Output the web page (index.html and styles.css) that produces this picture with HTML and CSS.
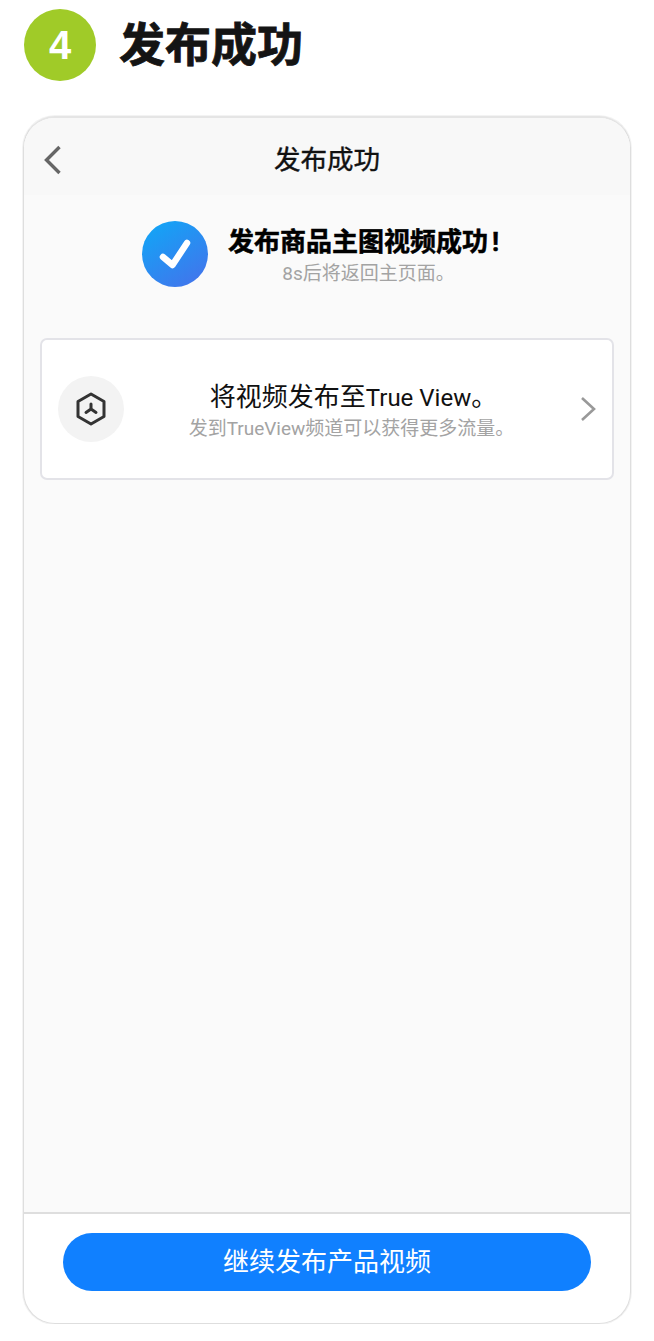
FILE: index.html
```html
<!DOCTYPE html>
<html lang="zh-CN">
<head>
    <meta charset="UTF-8">
    <meta name="viewport" content="width=device-width, initial-scale=1.0">
    <title>发布成功</title>
    <link rel="stylesheet" href="styles.css">
</head>
<body>
    <div class="step-head">
        <div class="step-num">4</div>
        <h1>发布成功</h1>
    </div>

    <div class="phone">
        <div class="nav-bar">
            <svg class="nav-back" width="20" height="30" viewBox="0 0 20 30">
                <path d="M16.5 2 L3.5 15 L16.5 28" fill="none" stroke="#666666" stroke-width="3.4"/>
            </svg>
            <span>发布成功</span>
        </div>

        <div class="content">
            <div class="success-row">
                <svg class="success-icon" width="66" height="66" viewBox="0 0 66 66">
                    <defs>
                        <linearGradient id="checkBg" x1="0.2" y1="0.05" x2="0.8" y2="0.95">
                            <stop offset="0" stop-color="#14a3f6"/>
                            <stop offset="1" stop-color="#4076ec"/>
                        </linearGradient>
                    </defs>
                    <circle cx="33" cy="33" r="33" fill="url(#checkBg)"/>
                    <path d="M21 36 L30.5 44 L45 22" fill="none" stroke="#ffffff" stroke-width="6.5" stroke-linecap="round" stroke-linejoin="round"/>
                </svg>
                <div class="success-text">
                    <div class="success-title">发布商品主图视频成功<span class="bang">!</span></div>
                    <div class="success-sub">8s后将返回主页面。</div>
                </div>
            </div>

            <div class="channel-card">
                <div class="channel-icon">
                    <svg width="32" height="34" viewBox="0 0 32 34">
                        <path d="M16 2 L29 9.5 L29 24.5 L16 32 L3 24.5 L3 9.5 Z" fill="none" stroke="#333333" stroke-width="3" stroke-linejoin="round"/>
                        <path d="M16 12 L16 17 M16 17 L11 20.5 M16 17 L21 20.5" fill="none" stroke="#333333" stroke-width="3" stroke-linecap="round"/>
                    </svg>
                </div>
                <div class="channel-text">
                    <div class="channel-title">将视频发布至<span class="latin">True View</span>。</div>
                    <div class="channel-sub">发到TrueView频道可以获得更多流量。</div>
                </div>
                <svg class="channel-arrow" width="18" height="26" viewBox="0 0 18 26">
                    <path d="M3 2 L15 13 L3 24" fill="none" stroke="#999999" stroke-width="2.6"/>
                </svg>
            </div>
        </div>

        <div class="footer">
            <button class="continue-btn">继续发布产品视频</button>
        </div>
    </div>
</body>
</html>
```

FILE: styles.css
```css
* {
    box-sizing: border-box;
}
body {
    margin: 0;
    padding: 9px 23px 0;
    background-color: #ffffff;
    font-family: Roboto, "Noto Sans CJK SC", sans-serif;
}
.step-head {
    display: flex;
    align-items: center;
    gap: 23px;
    height: 72px;
    margin-left: 1px;
}
.step-num {
    width: 72px;
    height: 72px;
    border-radius: 50%;
    background-color: #a0cb28;
    color: #ffffff;
    font-family: "Liberation Sans", sans-serif;
    font-size: 40px;
    font-weight: bold;
    line-height: 72px;
    text-align: center;
}
h1 {
    margin: -8px 0 0;
    font-size: 46px;
    font-weight: bold;
    color: #141414;
    -webkit-text-stroke: 0.8px #141414;
}
.phone {
    display: flex;
    flex-direction: column;
    width: 608px;
    height: 1208px;
    margin-top: 35px;
    border: 1px solid #dedede;
    border-top: 2px solid #e5e5e5;
    border-radius: 32px;
    box-shadow: 0 0 0 1px #f3f3f3;
    overflow: hidden;
    background-color: #ffffff;
}
.nav-bar {
    position: relative;
    flex: none;
    height: 77px;
    background-color: #f8f8f8;
    font-size: 26.5px;
    line-height: 84px;
    text-align: center;
    color: #111111;
    -webkit-text-stroke: 0.4px #111111;
}
.nav-back {
    position: absolute;
    left: 19px;
    top: 27px;
}
.content {
    flex: 1;
    padding: 0 16px;
    background-color: #fafafa;
    border-bottom: 2px solid #dedede;
}
.success-row {
    display: flex;
    align-items: center;
    justify-content: center;
    gap: 20px;
    padding-top: 26px;
    padding-right: 13px;
}
.success-text {
    padding-top: 3px;
}
.success-title {
    font-size: 26px;
    font-weight: bold;
    line-height: 36px;
    color: #000000;
    -webkit-text-stroke: 0.5px #000000;
}
.bang {
    margin-left: 4px;
}
.success-sub {
    margin-top: 1px;
    padding-left: 10px;
    font-size: 19px;
    line-height: 26px;
    text-align: center;
    color: #a3a3a3;
}
.channel-card {
    display: flex;
    align-items: center;
    height: 142px;
    margin-top: 51px;
    padding: 0 15px 0 16px;
    background-color: #ffffff;
    border: 2px solid #e3e3e8;
    border-radius: 7px;
}
.channel-icon {
    display: flex;
    align-items: center;
    justify-content: center;
    flex: none;
    width: 66px;
    height: 66px;
    border-radius: 50%;
    background-color: #f3f3f3;
}
.channel-text {
    flex: 1;
    padding-top: 2px;
    text-align: center;
}
.channel-title {
    padding-left: 4px;
    font-size: 26px;
    line-height: 36px;
    color: #111111;
}
.latin {
    font-size: 24px;
}
.channel-sub {
    font-size: 19px;
    line-height: 26px;
    color: #a3a3a3;
}
.channel-arrow {
    flex: none;
}
.footer {
    display: flex;
    align-items: flex-start;
    justify-content: center;
    flex: none;
    height: 109px;
    padding-top: 19px;
}
.continue-btn {
    width: 528px;
    height: 58px;
    padding: 0 0 5px;
    border: none;
    border-radius: 29px;
    background-color: #1080ff;
    color: #ffffff;
    font-family: inherit;
    font-size: 26px;
}
```
